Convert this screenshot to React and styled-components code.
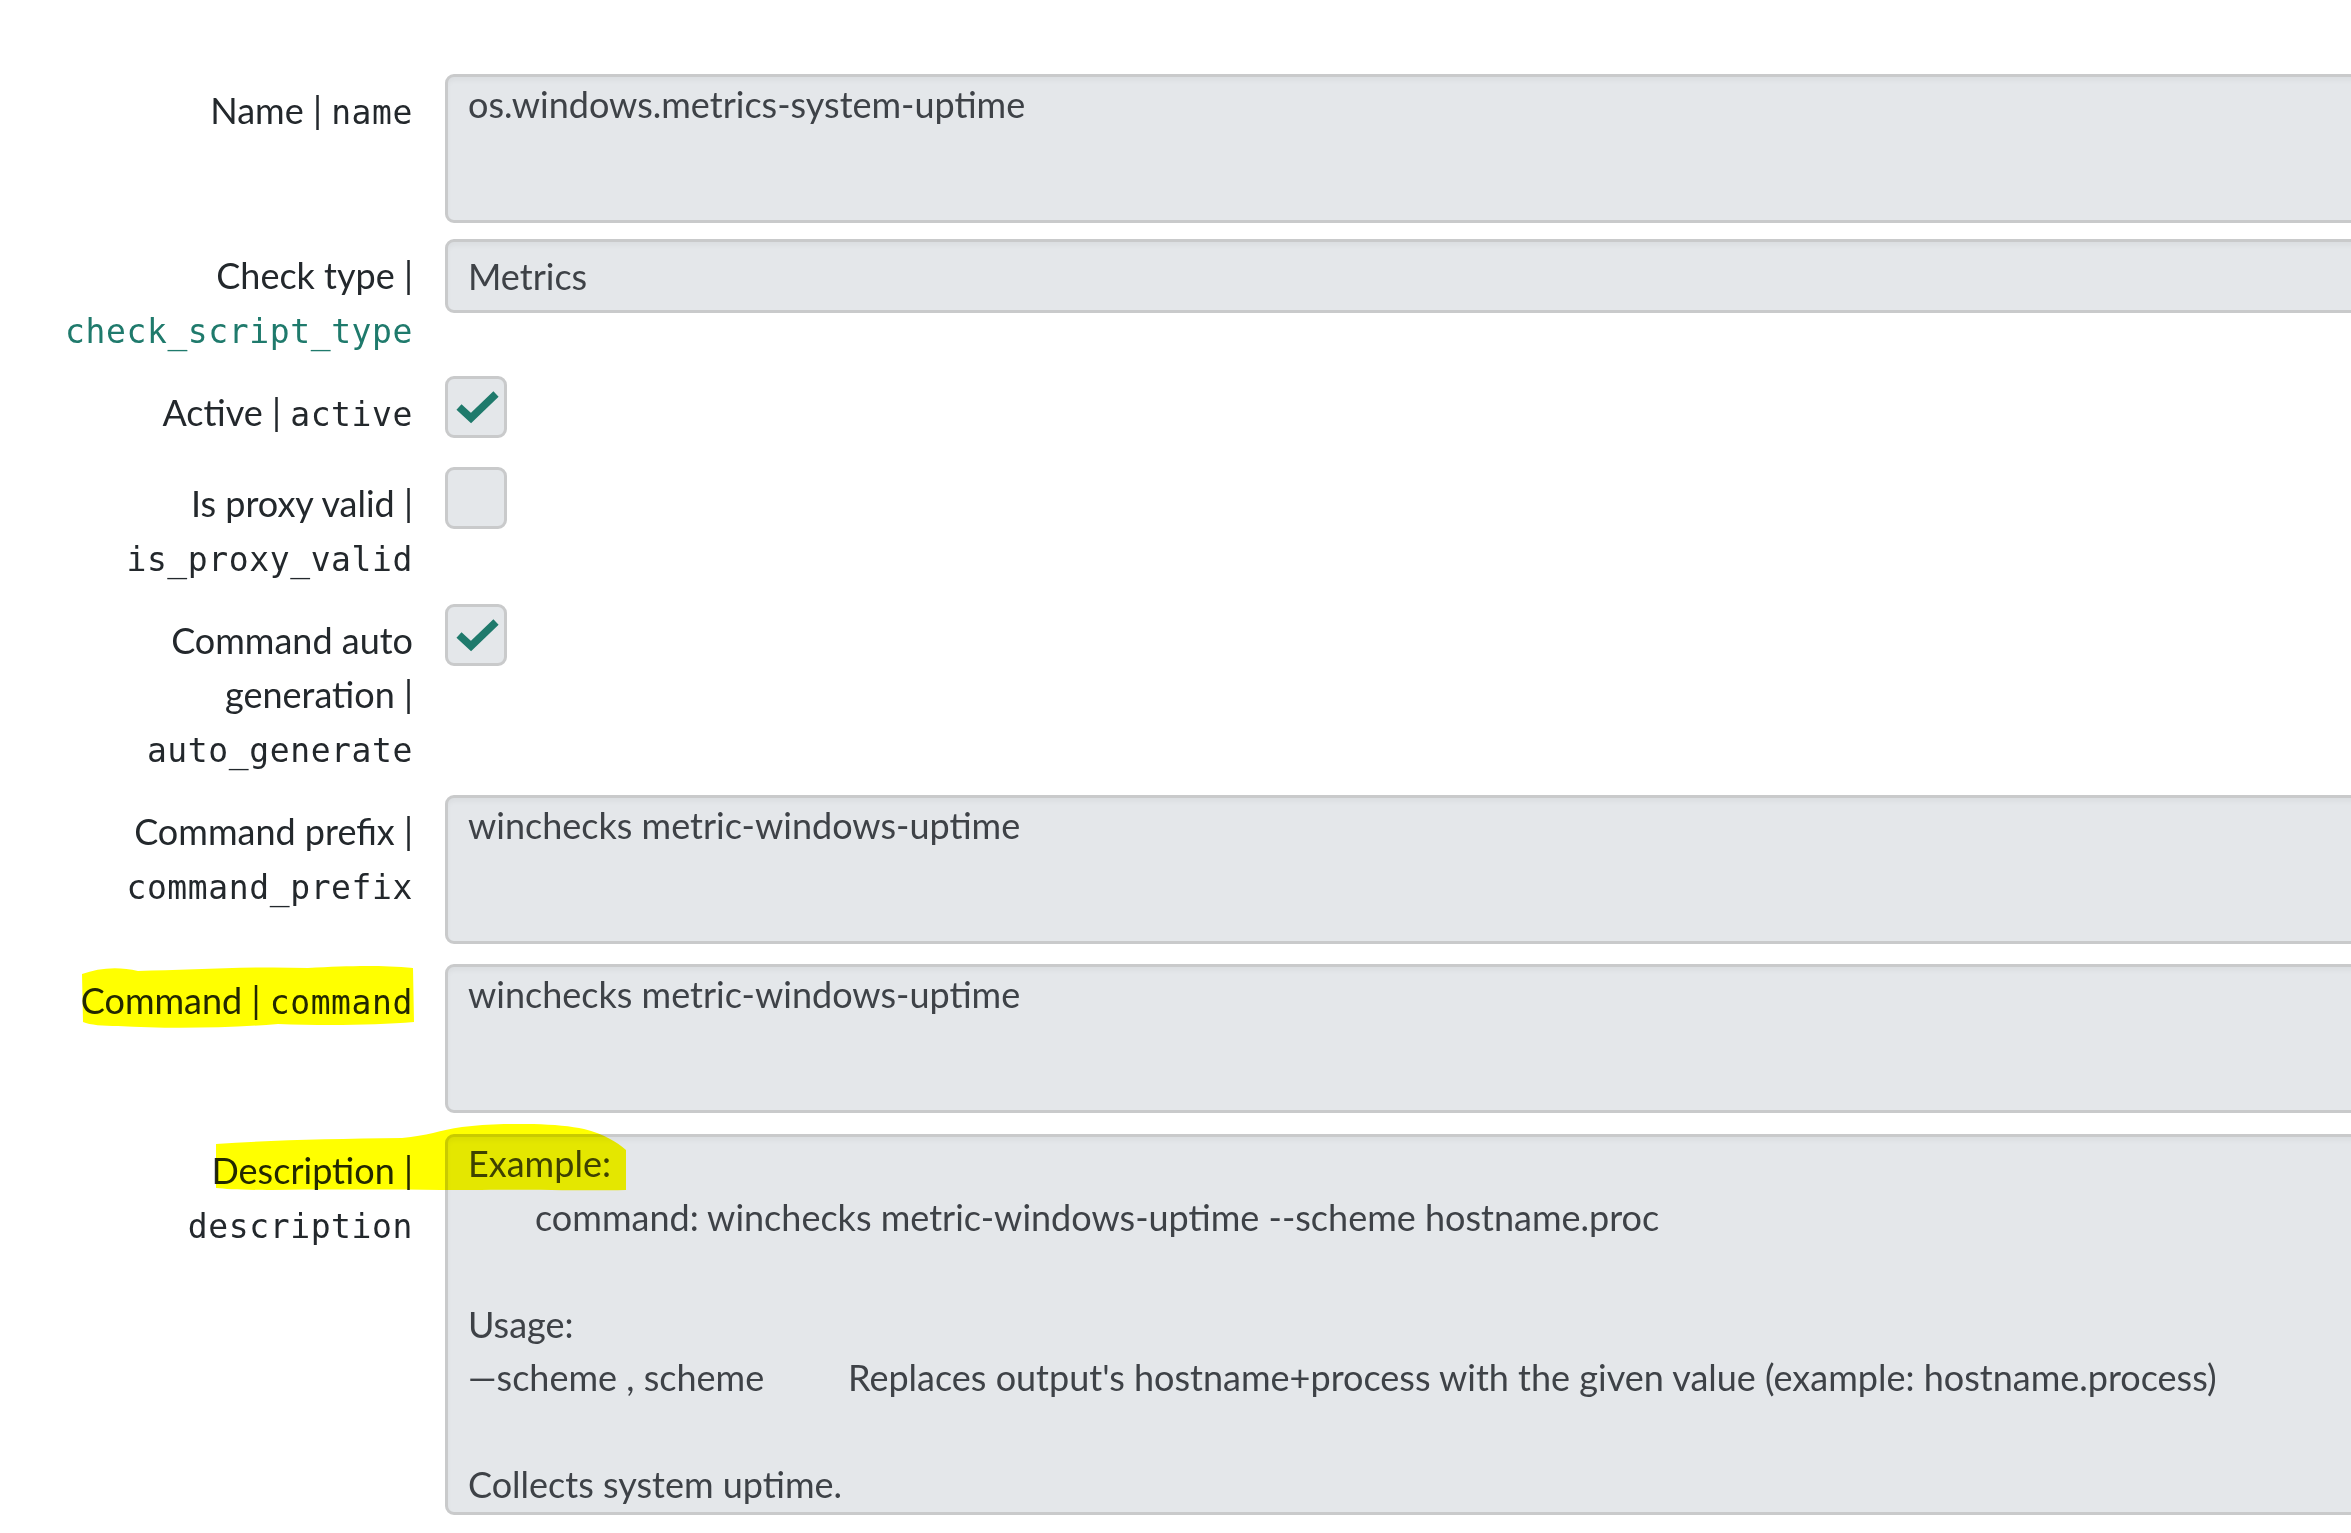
import React from 'react';
import styled, {createGlobalStyle} from 'styled-components';

const GlobalStyle = createGlobalStyle`
    html, body {
        margin: 0;
        padding: 0;
        background: #ffffff;
        overflow: hidden;
    }
    body {
        font-family: Lato, "Open Sans", sans-serif;
        color: #23282c;
    }
`;

const fields = [
    {title: 'Name', code: 'name', kind: 'area', height: 149, mb: 16, value: ['os.windows.metrics-system-uptime']},
    {title: 'Check type', code: 'check_script_type', green: true, kind: 'input', mb: 18, value: ['Metrics']},
    {title: 'Active', code: 'active', kind: 'check', mb: 18, checked: true},
    {title: 'Is proxy valid', code: 'is_proxy_valid', kind: 'check', mb: 18, checked: false},
    {title: 'Command auto generation', code: 'auto_generate', kind: 'check', mb: 18, checked: true},
    {title: 'Command prefix', code: 'command_prefix', kind: 'area', height: 149, mb: 20, value: ['winchecks metric-windows-uptime']},
    {title: 'Command', code: 'command', kind: 'area', height: 149, mb: 21, value: ['winchecks metric-windows-uptime'], mark: 'command'},
    {title: 'Description', code: 'description', kind: 'desc', mb: 0, mark: 'description'},
];

function Check({checked}) {
    return (
        <Styled.Box>
            {checked &&
                <svg width="56" height="56" viewBox="0 0 56 56">
                    <polyline points="11,28 23,39 48,15" fill="none" stroke="#1f7a6c" strokeWidth="7.5" strokeLinejoin="miter" />
                </svg>
            }
        </Styled.Box>
    );
}

function Description() {
    return (
        <Styled.Area lh={53}>
            <Styled.Line>Example:</Styled.Line>
            <Styled.Line indent={67}>command: winchecks metric-windows-uptime --scheme hostname.proc</Styled.Line>
            <Styled.Line />
            <Styled.Line>Usage:</Styled.Line>
            <Styled.Line>
                <Styled.Opt>—scheme , scheme</Styled.Opt>
                Replaces output's hostname+process with the given value (example: hostname.process)
            </Styled.Line>
            <Styled.Line />
            <Styled.Line>Collects system uptime.</Styled.Line>
        </Styled.Area>
    );
}

// marker strokes drawn over the form
function Marker({type}) {
    if (type === 'command') {
        return (
            <Styled.Marker style={{left: 78, top: -2}} width="340" height="70" viewBox="0 0 340 70">
                <path d="M4 12 C20 6 40 4 60 9 C110 8 170 4 230 6 C270 4 300 3 335 6 L336 60 C300 63 250 64 200 62 C150 66 90 67 40 64 C25 64 12 63 5 60 Z" fill="#ffff00" />
            </Styled.Marker>
        );
    }
    return (
        <Styled.Marker style={{left: 212, top: -10}} width="420" height="70" viewBox="0 0 420 70">
            <path d="M4 20 C60 16 120 15 190 14 C215 12 228 6 250 3 C290 -2 345 -1 372 5 C392 10 405 18 414 26 L414 66 C360 67 320 65 260 66 C200 66 120 65 60 66 C30 66 14 65 4 64 Z" fill="#ffff00" />
        </Styled.Marker>
    );
}

function App() {
    return (
        <>
            <GlobalStyle />
            <Styled.Page>
                {fields.map((f, index) => (
                    <Styled.Row key={index} mb={f.mb}>
                        {f.mark && <Marker type={f.mark} />}
                        <Styled.Label>
                            {f.title} | <Styled.Code green={f.green}>{f.code}</Styled.Code>
                        </Styled.Label>
                        <Styled.Control kind={f.kind}>
                            {f.kind === 'area' && (
                                <Styled.Area h={f.height}>{f.value[0]}</Styled.Area>
                            )}
                            {f.kind === 'input' && (
                                <Styled.Input>{f.value[0]}</Styled.Input>
                            )}
                            {f.kind === 'check' && <Check checked={f.checked} />}
                            {f.kind === 'desc' && <Description />}
                        </Styled.Control>
                    </Styled.Row>
                ))}
            </Styled.Page>
        </>
    );
}

const base = {
    labelWidth: 413,
    gap: 32,
    ft: 36,
    field: '#e4e7ea',
    border: '#c9cacb',
};

const Styled = {
    Page: styled.div`
        padding-top: 74px;
        width: 2700px;
    `,
    Row: styled.div`
        position: relative;
        display: grid;
        grid-template-columns: ${base.labelWidth}px 1fr;
        column-gap: ${base.gap}px;
        align-items: start;
        margin-bottom: ${props => props.mb}px;
    `,
    Label: styled.div`
        position: relative;
        z-index: 0;
        box-sizing: border-box;
        padding: 9px 0 2px 33px;
        text-align: right;
        font-size: ${base.ft}px;
        line-height: 54px;
        color: #23282c;
    `,
    Code: styled.code`
        font-family: "DejaVu Sans Mono", "Liberation Mono", monospace;
        font-size: 33px;
        line-height: 1;
        letter-spacing: 0.6px;
        color: ${props => props.green ? '#1f7a6c' : '#23282c'};
    `,
    Control: styled.div`
        min-height: ${props => props.kind === 'check' ? 73 : 0}px;
    `,
    Area: styled.div`
        box-sizing: border-box;
        height: ${props => props.h ? props.h + 'px' : 'auto'};
        padding: 0 20px;
        background: ${base.field};
        border: 3px solid ${base.border};
        border-radius: 9px;
        box-shadow: inset 0 4px 4px rgba(0, 0, 0, 0.035);
        font-size: ${base.ft}px;
        line-height: ${props => props.lh || 54}px;
        color: #3e4247;
        white-space: nowrap;
    `,
    Input: styled.div`
        box-sizing: border-box;
        height: 74px;
        padding: 7px 20px;
        background: ${base.field};
        border: 3px solid ${base.border};
        border-radius: 9px;
        box-shadow: inset 0 4px 4px rgba(0, 0, 0, 0.035);
        font-size: ${base.ft}px;
        line-height: 54px;
        color: #3e4247;
    `,
    Line: styled.div`
        height: 53.5px;
        padding-left: ${props => props.indent || 0}px;
    `,
    Opt: styled.span`
        display: inline-block;
        width: 380px;
    `,
    Box: styled.div`
        box-sizing: border-box;
        width: 62px;
        height: 62px;
        display: flex;
        align-items: center;
        justify-content: center;
        background: ${base.field};
        border: 3px solid ${base.border};
        border-radius: 9px;
    `,
    Marker: styled.svg`
        position: absolute;
        z-index: 2;
        mix-blend-mode: multiply;
        pointer-events: none;
    `,
};

export default App;
